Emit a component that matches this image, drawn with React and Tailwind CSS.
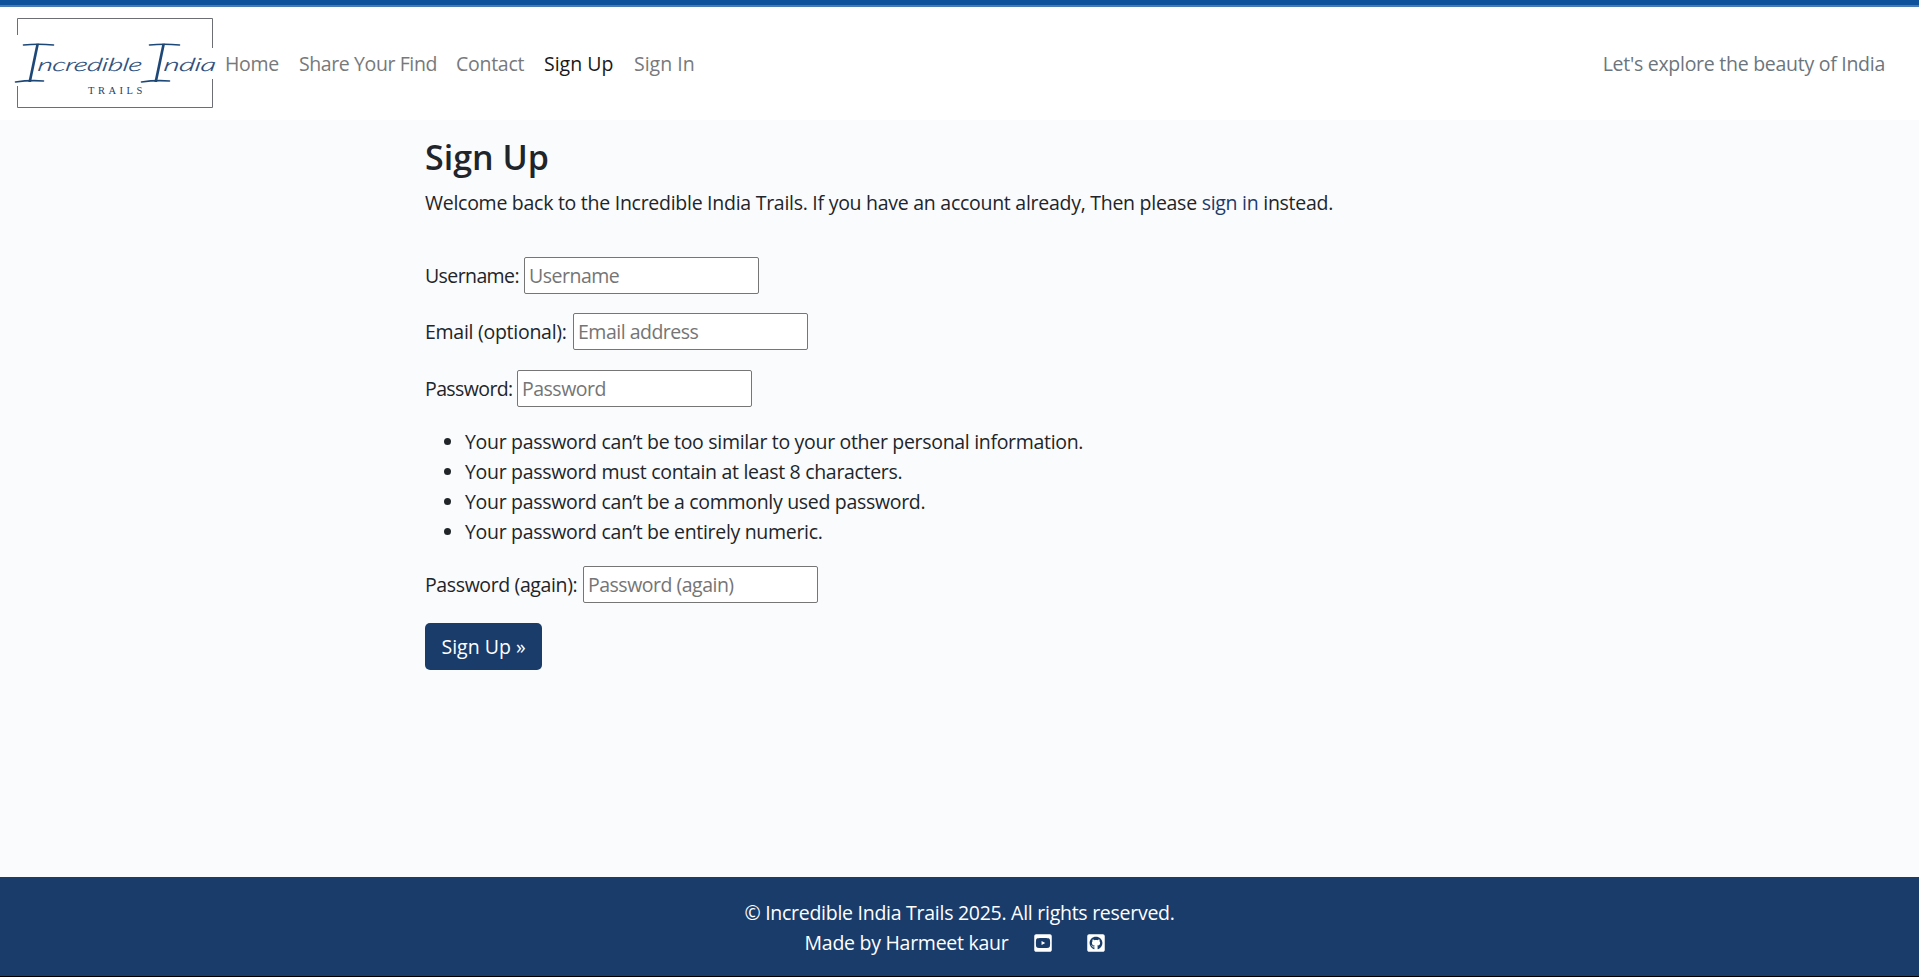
import { FaYoutubeSquare, FaGithubSquare } from "react-icons/fa";

const navLinks = [
  { label: "Home", w: "w-[54px]" },
  { label: "Share Your Find", w: "w-[137px] tracking-[-0.4px]" },
  { label: "Contact", w: "w-[68px]" },
  { label: "Sign Up", w: "w-[70px] tracking-normal", active: true },
  { label: "Sign In", w: "w-[61px] tracking-normal" },
];

const rules = [
  "Your password can’t be too similar to your other personal information.",
  "Your password must contain at least 8 characters.",
  "Your password can’t be a commonly used password.",
  "Your password can’t be entirely numeric.",
];

function Logo() {
  return (
    <svg width="202" height="95" viewBox="14 16 202 95" className="block">
      <g fill="none" stroke="#6b6f75" strokeWidth="1">
        <path d="M17.5 35V18.5H212.5V48" />
        <path d="M17.5 86V107.5H212.5V79" />
      </g>
      <g fill="#1d4777" stroke="#1d4777" strokeWidth="0.2" fontFamily="Lato, sans-serif" fontStyle="italic" fontWeight="300">
        <text transform="translate(25 82) skewX(-5)" fontSize="54" strokeWidth="0">I</text>
        <text transform="translate(151 82) skewX(-5)" fontSize="54" strokeWidth="0">I</text>
        <text transform="translate(37 71) skewX(-8)" fontSize="18" textLength="104" lengthAdjust="spacingAndGlyphs">ncredible</text>
        <text transform="translate(163 71) skewX(-8)" fontSize="18" textLength="52" lengthAdjust="spacingAndGlyphs">ndia</text>
      </g>
      <g fill="none" stroke="#1d4777" strokeWidth="1.6" strokeLinecap="round">
        <path d="M23.500 45Q38 43.500 53.500 45" />
        <path d="M149.500 45Q164 43.500 179.500 45" />
        <path d="M15.500 82Q29 80 43.500 81" />
        <path d="M141.500 82Q155 80 169.500 81" />
      </g>
      <text x="88" y="94" fontSize="10.5" fill="#1d3f6c" fontFamily="Liberation Serif, serif" textLength="54">TRAILS</text>
    </svg>
  );
}

function Field({ label, labelClass, placeholder, type = "text", gap }) {
  return (
    <p className={`flex items-center ${gap}`}>
      <label className={`whitespace-nowrap ${labelClass}`}>{label}</label>
      <input
        type={type}
        placeholder={placeholder}
        className="ml-[5px] h-[37px] w-[235px] rounded-[2px] border border-[#767676] bg-white px-1 tracking-[-0.5px] placeholder:text-[#757575]"
      />
    </p>
  );
}

export default function App() {
  return (
    <div className="flex h-[977px] flex-col bg-[#fafbfd] font-['Open_Sans',sans-serif] text-[19.5px] leading-[30px] tracking-[-0.27px] text-[#212529]">
      <div className="h-[7px] border-b-2 border-[#4a7ab3] bg-[#0f529c]" />
      <header className="flex h-[113px] items-center bg-white pr-[34px] pl-[14px] text-[#77797b]">
        <Logo />
        <nav className="ml-[9px] flex gap-[20px]">
          {navLinks.map((l) => (
            <a key={l.label} className={`${l.w} whitespace-nowrap ${l.active ? "text-[#191919]" : ""}`}>
              {l.label}
            </a>
          ))}
        </nav>
        <span className="ml-auto text-[#6c757d]">Let's explore the beauty of India</span>
      </header>
      <main className="flex-1 pt-[17px] pl-[425px]">
        <h1 className="text-[34px] leading-[40px] font-semibold tracking-normal">Sign Up</h1>
        <p className="mt-[11px]">
          Welcome back to the Incredible India Trails. If you have an account already, Then please{" "}
          <a className="text-[#1a3c6b]">sign in</a> instead.
        </p>
        <form>
          <Field label="Username:" labelClass="w-[94px] tracking-[-0.6px]" placeholder="Username" gap="mt-[39px]" />
          <Field label="Email (optional):" labelClass="w-[143px]" placeholder="Email address" gap="mt-[19px]" />
          <Field label="Password:" labelClass="w-[87px] tracking-[-0.6px]" placeholder="Password" type="password" gap="mt-[20px]" />
          <ul className="mt-[20px] list-disc pl-10 tracking-[-0.31px]">
            {rules.map((r) => (
              <li key={r}>{r}</li>
            ))}
          </ul>
          <Field label="Password (again):" labelClass="w-[153px] tracking-[-0.38px]" placeholder="Password (again)" type="password" gap="mt-[19px]" />
          <button type="button" className="mt-[20px] h-[47px] w-[117px] rounded-[5px] bg-[#1a3c6b] tracking-normal text-white">
            Sign Up »
          </button>
        </form>
      </main>
      <footer className="flex h-[100px] flex-col items-center border-b border-black bg-[#1a3c6b] pt-[21px] text-white">
        <p>© Incredible India Trails 2025. All rights reserved.</p>
        <p className="flex items-center">
          <span>Made by Harmeet kaur</span>
          <FaYoutubeSquare className="ml-[25px] size-[20px]" />
          <FaGithubSquare className="mr-[8px] ml-[33px] size-[20px]" />
        </p>
      </footer>
    </div>
  );
}
